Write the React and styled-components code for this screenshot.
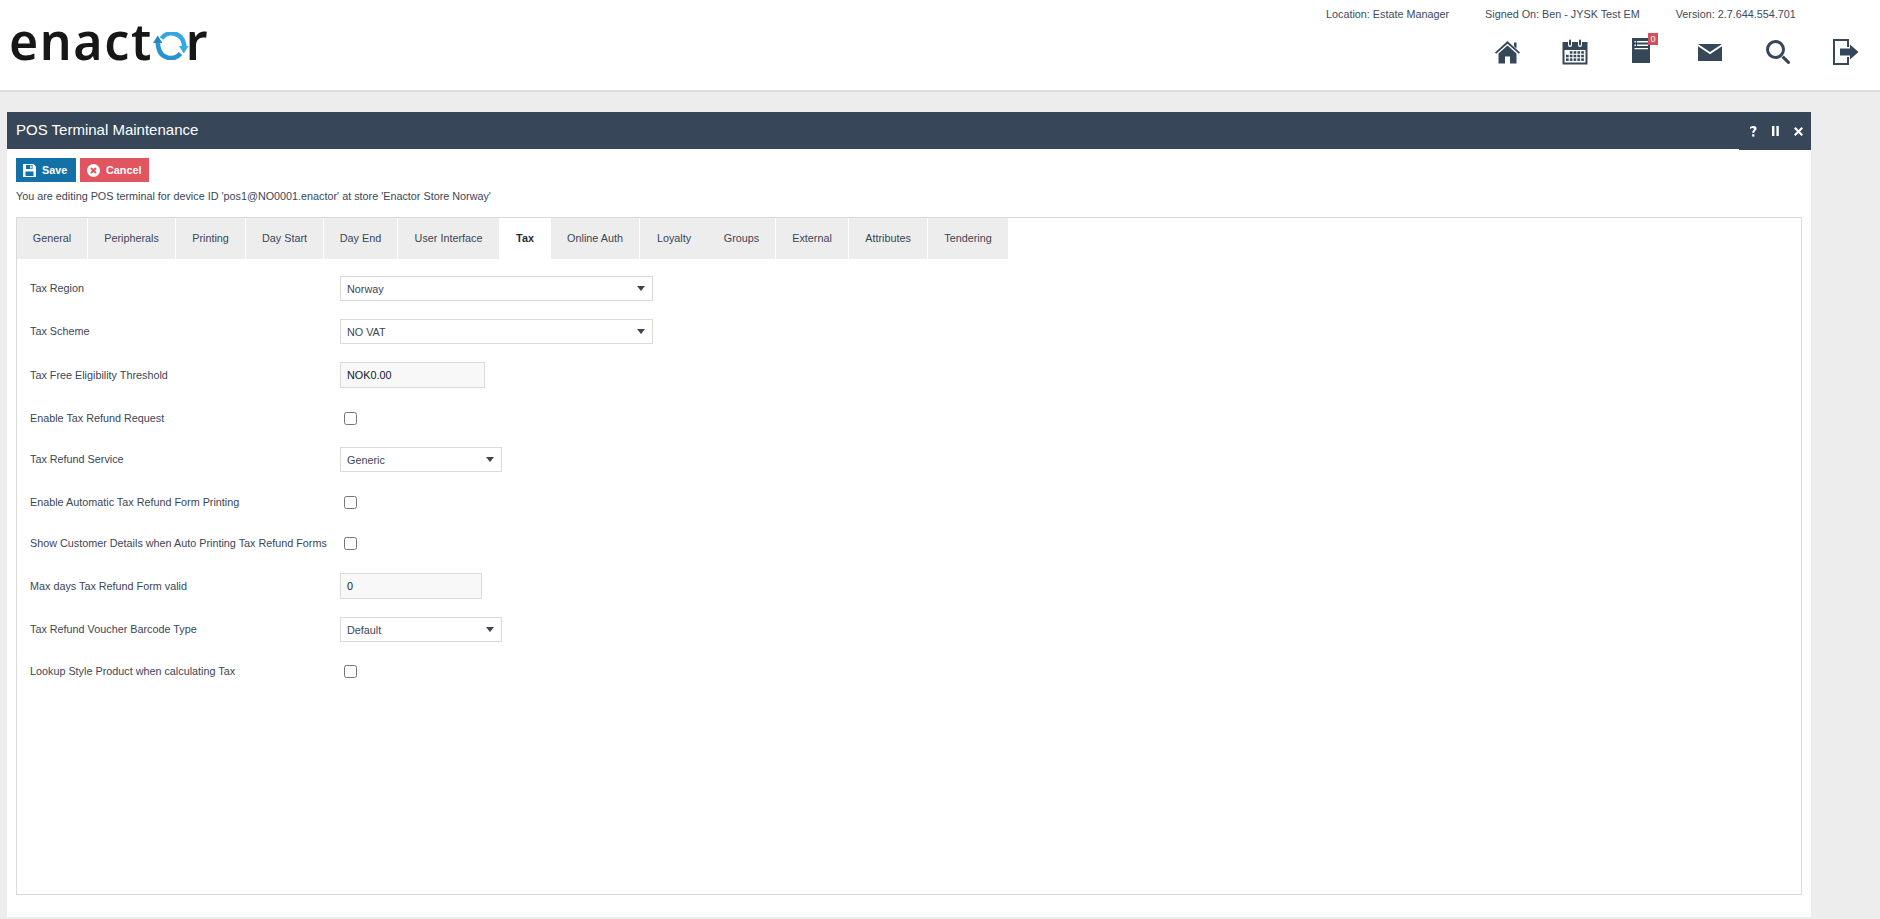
import React from "react";
import styled, { createGlobalStyle } from "styled-components";

const Global = createGlobalStyle`
  html, body { margin: 0; padding: 0; height: 919px; overflow: hidden; background: #ededed; }
  body { font-family: "Liberation Sans", Arial, sans-serif; font-size: 10.8px; color: #3a4656; }
  #root { height: 919px; }
  * { box-sizing: border-box; }
`;

const Page = styled.div`
  height: 919px;
  display: flex;
  flex-direction: column;
`;

const Header = styled.header`
  height: 92px;
  flex: none;
  background: #fff;
  border-bottom: 2px solid #dedede;
  display: flex;
  justify-content: space-between;
`;

const Logo = styled.div`
  display: flex;
  align-items: baseline;
  padding: 11px 0 0 9px;
  height: 62px;
  font-family: "Noto Sans", sans-serif;
  font-size: 50px;
  line-height: 60px;
  font-weight: 600;
  color: #171717;
  letter-spacing: 1.6px;
  & svg { flex: none; align-self: flex-end; margin: 0 -3px 2px 0; }
`;

const HeaderRight = styled.div`
  width: 570px;
  display: flex;
  flex-direction: column;
`;

const MetaRow = styled.div`
  height: 28px;
  display: flex;
  align-items: center;
  color: #3c4a5e;
`;

const Meta = styled.span`
  margin-left: ${(p) => p.$left}px;
  white-space: nowrap;
`;

const IconRow = styled.div`
  height: 48px;
  display: flex;
  align-items: center;
`;

const IconSlot = styled.span`
  display: block;
  flex: none;
  margin-left: ${(p) => p.$left}px;
  margin-bottom: ${(p) => p.$lift || 0}px;
  position: relative;
  & svg { display: block; fill: #36475a; }
`;

const Badge = styled.span`
  position: absolute;
  left: 16px;
  top: -5px;
  width: 10px;
  height: 12px;
  background: #d4505f;
  color: #fff;
  font-size: 9px;
  line-height: 12px;
  text-align: center;
`;

const Main = styled.main`
  flex: 1;
  padding: 20px 69px 2px 7px;
  display: flex;
  min-height: 0;
`;

const Panel = styled.section`
  flex: 1;
  background: #fff;
  display: flex;
  flex-direction: column;
  min-width: 0;
`;

const TitleBar = styled.div`
  height: 37px;
  flex: none;
  background: #374759;
  display: flex;
  justify-content: space-between;
  color: #fff;
`;

const Title = styled.h1`
  margin: 0;
  padding-left: 9px;
  font-weight: 400;
  font-size: 15px;
  line-height: 36px;
`;

const TitleControls = styled.div`
  width: 72px;
  height: 38px;
  background: #374759;
  display: flex;
  align-items: center;
  justify-content: flex-end;
  gap: 15px;
  padding: 0 8px 0 0;
  & svg { display: block; fill: #fff; }
`;

const Body = styled.div`
  flex: 1;
  display: flex;
  flex-direction: column;
  padding: 9px 9px 22px 9px;
  min-height: 0;
`;

const Actions = styled.div`
  display: flex;
  gap: 4px;
`;

const Button = styled.button`
  height: 24px;
  width: ${(p) => p.$width}px;
  border: 0;
  padding: 0 0 0 7px;
  background: ${(p) => p.$bg};
  color: #fff;
  font-family: inherit;
  font-size: 10.8px;
  font-weight: 700;
  display: flex;
  align-items: center;
  gap: 6px;
  & svg { display: block; flex: none; }
`;

const Message = styled.p`
  margin: 0;
  height: 35px;
  padding-top: 6px;
  line-height: 16px;
  color: #3a4656;
`;

const TabBox = styled.div`
  flex: 1;
  border: 1px solid #dadada;
  min-height: 0;
`;

const Tabs = styled.div`
  display: flex;
  height: 41px;
`;

const Tab = styled.div`
  width: ${(p) => p.$width}px;
  margin-right: ${(p) => p.$gap}px;
  padding-bottom: 1px;
  background: ${(p) => (p.$active ? "#fff" : "#ededed")};
  color: ${(p) => (p.$active ? "#222d3a" : "#3a4656")};
  font-weight: ${(p) => (p.$active ? 700 : 400)};
  display: flex;
  align-items: center;
  justify-content: center;
  white-space: nowrap;
`;

const Form = styled.div`
  padding: 8px 0 0 13px;
  display: flex;
  flex-direction: column;
`;

const Row = styled.div`
  height: ${(p) => p.$height}px;
  display: grid;
  grid-template-columns: 310px 1fr;
  align-items: center;
`;

const Label = styled.label`
  color: #3a4656;
  white-space: nowrap;
  padding-bottom: 1px;
`;

const Select = styled.div`
  width: ${(p) => p.$width}px;
  height: 25px;
  border: 1px solid #dadada;
  background: #fff;
  padding-left: 6px;
  display: flex;
  align-items: center;
  position: relative;
  color: #3a4656;
  &::after {
    content: "";
    position: absolute;
    right: 7px;
    top: 9px;
    border-left: 4px solid transparent;
    border-right: 4px solid transparent;
    border-top: 5px solid #3a4656;
  }
`;

const TextBox = styled.div`
  width: ${(p) => p.$width}px;
  height: 26px;
  border: 1px solid #dadada;
  background: #f8f8f8;
  padding-left: 6px;
  color: #11161e;
  display: flex;
  align-items: center;
`;

const Check = styled.input`
  width: 13px;
  height: 13px;
  margin: 0 0 0 4px;
  display: block;
`;

const RefreshO = () => (
  <svg width="36" height="28" viewBox="0 0 36 28" fill="none">
    <path d="M5 11 A13 13 0 0 0 5.6 16 A12.5 12.5 0 0 0 27.5 21.5" stroke="#2b93cb" strokeWidth="4.6" fill="none" />
    <path d="M30.8 17 A13 13 0 0 0 31 12 A12.5 12.5 0 0 0 8.5 6.5" stroke="#35a6de" strokeWidth="4.6" fill="none" />
    <path d="M4.7 3.5 L0 11 H9.4 Z" fill="#2886bb" />
    <path d="M30.8 21.5 L26 14 H35.6 Z" fill="#35ace2" />
  </svg>
);

const Home = () => (
  <svg width="25" height="23" viewBox="0 0 25 23">
    <path d="M12.5 0 L25 11.5 L23.8 12.8 L12.5 2.8 L1.2 12.8 L0 11.5 Z" />
    <path d="M19 1.5 H21.5 V7.5 L19 5.2 Z" />
    <path d="M12.5 4.6 L21.5 12.5 V22.5 H15 V15.5 H10 V22.5 H3.5 V12.5 Z" />
  </svg>
);

const Calendar = () => (
  <svg width="26" height="26" viewBox="0 0 26 26">
    <path d="M0.5 3 H6 V6 A2 2 0 0 0 10 6 V3 H16 V6 A2 2 0 0 0 20 6 V3 H25.5 V25.5 H0.5 Z M2.5 11 V23.5 H23.5 V11 Z" fillRule="evenodd" />
    <rect x="7" y="0.5" width="2" height="6" rx="1" />
    <rect x="17" y="0.5" width="2" height="6" rx="1" />
    {[0, 1, 2].map((r) =>
      [0, 1, 2, 3, 4].map((c) =>
        r === 0 && c === 0 ? null : (
          <rect key={`${r}${c}`} x={4 + c * 3.8} y={12.2 + r * 3.6} width="2.7" height="2.5" />
        )
      )
    )}
  </svg>
);

const Doc = () => (
  <svg width="18" height="25" viewBox="0 0 18 25">
    <path d="M0 0 H18 V25 H0 Z M2.5 3 V4.5 H4 V3 Z M5 3 V4.5 H16 V3 Z M2.5 6.5 V8 H4 V6.5 Z M5 6.5 V8 H16 V6.5 Z M2.5 10 V11.3 H16 V10 Z" fillRule="evenodd" />
  </svg>
);

const Mail = () => (
  <svg width="24" height="17" viewBox="0 0 24 17">
    <path d="M0 0 H24 L12 8 Z" />
    <path d="M0 2.2 L12 10.2 L24 2.2 V17 H0 Z" />
  </svg>
);

const Search = () => (
  <svg width="24" height="24" viewBox="0 0 24 24">
    <path d="M9.5 0 A9.5 9.5 0 1 1 9.5 19 A9.5 9.5 0 1 1 9.5 0 Z M9.5 3 A6.5 6.5 0 1 0 9.5 16 A6.5 6.5 0 1 0 9.5 3 Z" fillRule="evenodd" />
    <path d="M15.5 17.7 L17.7 15.5 L23.5 21.3 A1.5 1.5 0 0 1 21.3 23.5 Z" />
  </svg>
);

const Logout = () => (
  <svg width="26" height="26" viewBox="0 0 26 26">
    <path d="M0 0 H16 V8 H14 V2 H2 V24 H14 V18 H16 V26 H0 Z" />
    <path d="M7 9.5 H17 V5.5 L25.5 13 L17 20.5 V16.5 H7 Z" />
  </svg>
);

const Help = () => (
  <svg width="7" height="11" viewBox="0 0 7 11">
    <path d="M0 1 Q3.5 -0.8 6 0.8 Q7.5 3.5 5 5 Q4.3 5.6 4.3 7 H2.3 Q2.2 4.8 3.6 3.8 Q4.4 3 3.5 2.2 Q2 1.7 0 3 Z" />
    <rect x="2.2" y="8.2" width="2.2" height="2.4" />
  </svg>
);

const Pause = () => (
  <svg width="7" height="10" viewBox="0 0 7 10">
    <rect x="0" y="0" width="2.4" height="10" />
    <rect x="4.4" y="0" width="2.4" height="10" />
  </svg>
);

const Close = () => (
  <svg width="9" height="9" viewBox="0 0 9 9">
    <path d="M0 1.5 L1.5 0 L4.5 3 L7.5 0 L9 1.5 L6 4.5 L9 7.5 L7.5 9 L4.5 6 L1.5 9 L0 7.5 L3 4.5 Z" />
  </svg>
);

const SaveIcon = () => (
  <svg width="13" height="13" viewBox="0 0 13 13" fill="#fff">
    <path d="M0 0 H10.5 L13 2.5 V13 H0 Z M3 1 V5 H9.5 V1 Z M2.5 7.5 V12 H10.5 V7.5 Z" fillRule="evenodd" />
    <rect x="7.2" y="1.6" width="1.5" height="2.8" />
  </svg>
);

const CancelIcon = () => (
  <svg width="13" height="13" viewBox="0 0 13 13">
    <circle cx="6.5" cy="6.5" r="6.5" fill="#fff" />
    <path d="M4 4 L9 9 M9 4 L4 9" stroke="#e0555f" strokeWidth="2" />
  </svg>
);

const tabs = [
  ["General", 70, 1],
  ["Peripherals", 87, 1],
  ["Printing", 69, 1],
  ["Day Start", 77, 1],
  ["Day End", 73, 1],
  ["User Interface", 101, 0],
  ["Tax", 52, 0],
  ["Online Auth", 88, 1],
  ["Loyalty", 68, 0],
  ["Groups", 67, 1],
  ["External", 72, 1],
  ["Attributes", 78, 1],
  ["Tendering", 80, 0],
];

const rows = [
  { label: "Tax Region", h: 43, type: "select", w: 313, v: "Norway" },
  { label: "Tax Scheme", h: 43, type: "select", w: 313, v: "NO VAT" },
  { label: "Tax Free Eligibility Threshold", h: 44, type: "text", w: 145, v: "NOK0.00" },
  { label: "Enable Tax Refund Request", h: 42, type: "check" },
  { label: "Tax Refund Service", h: 41, type: "select", w: 162, v: "Generic" },
  { label: "Enable Automatic Tax Refund Form Printing", h: 44, type: "check" },
  { label: "Show Customer Details when Auto Printing Tax Refund Forms", h: 38, type: "check" },
  { label: "Max days Tax Refund Form valid", h: 48, type: "text", w: 142, v: "0" },
  { label: "Tax Refund Voucher Barcode Type", h: 39, type: "select", w: 162, v: "Default" },
  { label: "Lookup Style Product when calculating Tax", h: 44, type: "check" },
];

const Control = ({ row }) => {
  if (row.type === "select") return <Select $width={row.w}>{row.v}</Select>;
  if (row.type === "text") return <TextBox $width={row.w}>{row.v}</TextBox>;
  return <Check type="checkbox" />;
};

export default function App() {
  return (
    <Page>
      <Global />
      <Header>
        <Logo>
          <span>enact</span>
          <RefreshO />
          <span>r</span>
        </Logo>
        <HeaderRight>
          <MetaRow>
            <Meta $left={16}>Location: Estate Manager</Meta>
            <Meta $left={36}>Signed On: Ben - JYSK Test EM</Meta>
            <Meta $left={36}>Version: 2.7.644.554.701</Meta>
          </MetaRow>
          <IconRow>
            <IconSlot $left={185}><Home /></IconSlot>
            <IconSlot $left={42}><Calendar /></IconSlot>
            <IconSlot $left={44} $lift={4}>
              <Doc />
              <Badge>0</Badge>
            </IconSlot>
            <IconSlot $left={48}><Mail /></IconSlot>
            <IconSlot $left={44}><Search /></IconSlot>
            <IconSlot $left={43}><Logout /></IconSlot>
          </IconRow>
        </HeaderRight>
      </Header>
      <Main>
        <Panel>
          <TitleBar>
            <Title>POS Terminal Maintenance</Title>
            <TitleControls>
              <Help />
              <Pause />
              <Close />
            </TitleControls>
          </TitleBar>
          <Body>
            <Actions>
              <Button $bg="#1272a8" $width={60}><SaveIcon />Save</Button>
              <Button $bg="#e0555f" $width={69}><CancelIcon />Cancel</Button>
            </Actions>
            <Message>You are editing POS terminal for device ID 'pos1@NO0001.enactor' at store 'Enactor Store Norway'</Message>
            <TabBox>
              <Tabs>
                {tabs.map(([name, width, gap]) => (
                  <Tab key={name} $width={width} $gap={gap} $active={name === "Tax"}>{name}</Tab>
                ))}
              </Tabs>
              <Form>
                {rows.map((row) => (
                  <Row key={row.label} $height={row.h}>
                    <Label>{row.label}</Label>
                    <Control row={row} />
                  </Row>
                ))}
              </Form>
            </TabBox>
          </Body>
        </Panel>
      </Main>
    </Page>
  );
}
